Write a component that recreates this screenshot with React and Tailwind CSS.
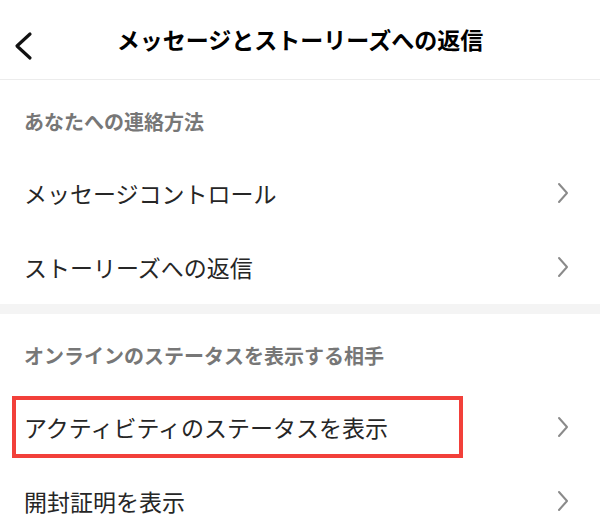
import React from "react";

const font = { fontFamily: '"Noto Sans CJK JP", "Noto Sans", sans-serif' };

function Chevron() {
  return (
    <svg width="14" height="22" viewBox="0 0 14 22" fill="none" className="shrink-0">
      <path d="M3 2 L11 11 L3 20" stroke="#8a8a8a" strokeWidth="2" strokeLinecap="round" strokeLinejoin="round" />
    </svg>
  );
}

function Row({ label, highlight }) {
  return (
    <div className="relative flex h-[74px] items-center justify-between pl-[24px] pr-[30px]">
      <span className="text-[23px] text-[#262626] leading-none">{label}</span>
      <Chevron />
      {highlight && (
        <div className="absolute left-[12px] top-[6px] h-[62px] w-[451px] border-[4px] border-[#f2403a]" />
      )}
    </div>
  );
}

function SectionHeader({ label }) {
  return (
    <div className="flex h-[76px] items-center pl-[24px] pt-[8px]">
      <span className="text-[20px] font-semibold text-[#777777] leading-none">{label}</span>
    </div>
  );
}

export default function App() {
  return (
    <div className="h-[531px] w-[600px] overflow-hidden bg-white" style={font}>
      <div className="relative flex h-[80px] items-center justify-center border-b border-[#ececec]">
        <svg width="24" height="30" viewBox="0 0 24 30" fill="none" className="absolute left-[11px] top-[31px]">
          <path d="M19 3 L6 15 L19 27" stroke="#111" strokeWidth="3.2" strokeLinecap="round" strokeLinejoin="round" />
        </svg>
        <span className="text-[23px] font-bold text-black leading-none">メッセージとストーリーズへの返信</span>
      </div>
      <SectionHeader label="あなたへの連絡方法" />
      <Row label="メッセージコントロール" />
      <Row label="ストーリーズへの返信" />
      <div className="h-[10px] bg-[#f4f4f4]" />
      <SectionHeader label="オンラインのステータスを表示する相手" />
      <Row label="アクティビティのステータスを表示" highlight />
      <Row label="開封証明を表示" />
    </div>
  );
}
